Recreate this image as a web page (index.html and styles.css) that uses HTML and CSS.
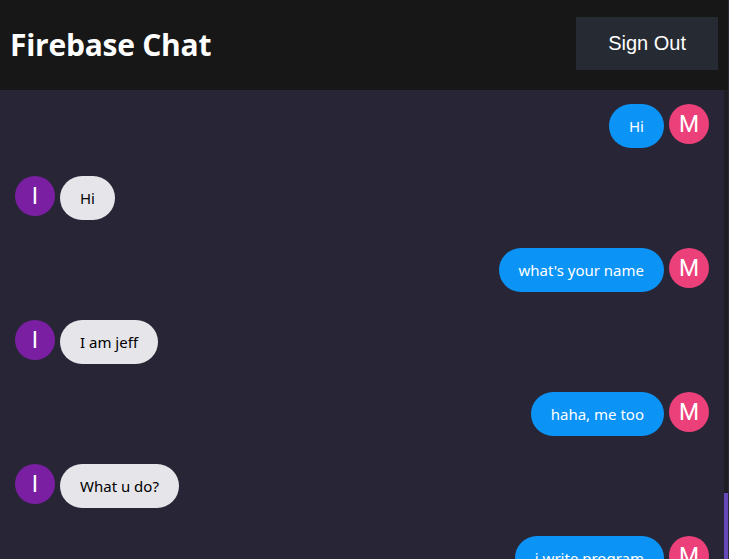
FILE: index.html
```html
<!DOCTYPE html>
<html lang="en">
<head>
<meta charset="utf-8">
<title>Firebase Chat</title>
<link rel="stylesheet" href="styles.css">
</head>
<body>
<div class="app">
  <header class="topbar">
    <h1 class="title">Firebase Chat</h1>
    <button class="signout">Sign Out</button>
  </header>
  <div class="chat">
    <main class="messages">
      <div class="message sent"><span class="avatar me">M</span><p class="bubble">Hi</p></div>
      <div class="message received"><span class="avatar them">I</span><p class="bubble">Hi</p></div>
      <div class="message sent"><span class="avatar me">M</span><p class="bubble">what's your name</p></div>
      <div class="message received"><span class="avatar them">I</span><p class="bubble">I am jeff</p></div>
      <div class="message sent"><span class="avatar me">M</span><p class="bubble">haha, me too</p></div>
      <div class="message received"><span class="avatar them">I</span><p class="bubble">What u do?</p></div>
      <div class="message sent"><span class="avatar me">M</span><p class="bubble">i write program</p></div>
    </main>
    <div class="scrollbar"><div class="thumb"></div></div>
  </div>
</div>
</body>
</html>
```

FILE: styles.css
```css
html, body {
  margin: 0;
  padding: 0;
  height: 100%;
}
body {
  background: #282c34;
  overflow: hidden;
}
.app {
  width: 728px;
  height: 100%;
  display: flex;
  flex-direction: column;
  background: #282636;
}
.topbar {
  height: 90px;
  flex: none;
  box-sizing: border-box;
  padding: 10px;
  background: #171717;
  display: flex;
  align-items: center;
  justify-content: space-between;
  color: #fff;
}
.title {
  margin: 0 0 2px 0;
  font-family: "Open Sans", sans-serif;
  font-weight: 700;
  font-size: 30px;
  letter-spacing: -0.25px;
}
.signout {
  background: #262a33;
  border: none;
  color: #fff;
  padding: 15px 32px;
  font-family: "Liberation Sans", Arial, sans-serif;
  font-size: 20px;
  line-height: 23px;
  margin-bottom: 3px;
}
.chat {
  flex: 1;
  display: flex;
  overflow: hidden;
  min-height: 0;
}
.messages {
  flex: 1;
  padding: 0 10px;
  margin-top: -2px;
  display: flex;
  flex-direction: column;
  font-family: "Noto Sans", "Open Sans", sans-serif;
}
.message {
  display: flex;
  align-items: center;
  flex: none;
}
.message.sent {
  flex-direction: row-reverse;
}
.avatar {
  width: 40px;
  height: 40px;
  border-radius: 50%;
  margin: 2px 5px;
  flex: none;
  display: flex;
  align-items: center;
  justify-content: center;
  color: #fff;
  font-family: Roboto, sans-serif;
  font-size: 23px;
}
.avatar.me { background: #ec407a; }
.avatar.them { background: #7b1fa2; }
.bubble {
  margin: 16px 0 12px 0;
  padding: 10px 20px;
  line-height: 24px;
  border-radius: 25px;
  font-size: 15px;
  text-align: center;
  max-width: 500px;
}
.sent .bubble {
  background: #0b93f6;
  color: #fff;
}
.received .bubble {
  background: #e5e5ea;
  color: #000;
}
.scrollbar {
  width: 4px;
  flex: none;
  background: #1e1e24;
  display: flex;
  flex-direction: column;
  justify-content: flex-end;
}
.thumb {
  height: 66px;
  background: #6649b8;
}
```
